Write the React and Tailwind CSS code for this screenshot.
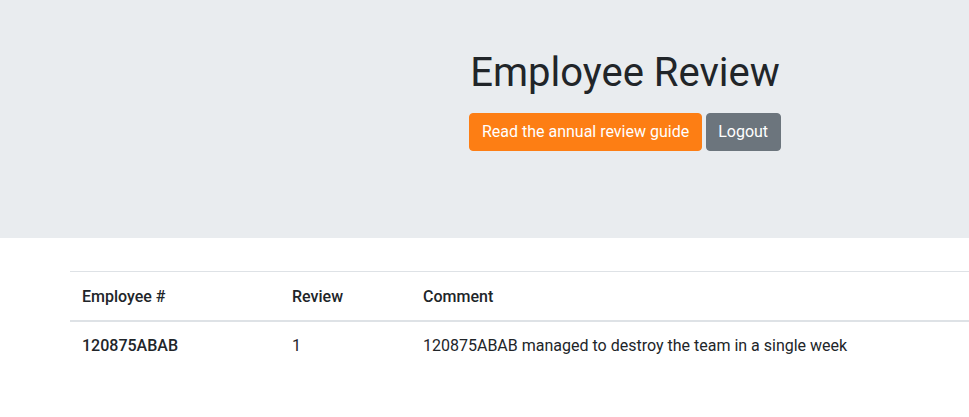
export default function App() {
  return (
    <div className="w-[969px] h-[417px] overflow-hidden bg-white" style={{ fontFamily: 'Roboto, "Liberation Sans", sans-serif' }}>
      <div className="w-[1250px] text-[#212529]">
        <div className="h-[238px] bg-[#e9ecef] mb-[33px] flex justify-center">
          <div className="flex flex-col items-center pt-[49px]">
            <h1 className="text-[40px] leading-[48px] font-normal mb-[16px]">Employee Review</h1>
            <div className="flex gap-[4px]">
              <button className="h-[38px] px-[11.5px] rounded-[4px] border border-[#fd7e14] bg-[#fd7e14] text-white text-[16px] leading-[24px]">Read the annual review guide</button>
              <button className="h-[38px] px-[11.5px] rounded-[4px] border border-[#6c757d] bg-[#6c757d] text-white text-[16px] leading-[24px]">Logout</button>
            </div>
          </div>
        </div>
        <div className="w-[1110px] mx-auto">
          <table className="w-full border-collapse text-[16px] leading-[24px]">
            <thead>
              <tr className="border-t border-[#dee2e6] border-b-2">
                <th className="w-[210px] px-[12px] pt-[13px] pb-[11px] text-left font-medium">Employee #</th>
                <th className="w-[131px] px-[12px] pt-[13px] pb-[11px] text-left font-medium">Review</th>
                <th className="px-[12px] pt-[13px] pb-[11px] text-left font-medium">Comment</th>
              </tr>
            </thead>
            <tbody>
              <tr>
                <td className="px-[12px] pt-[12px] pb-[11px] font-medium">120875ABAB</td>
                <td className="px-[12px] pt-[12px] pb-[11px]">1</td>
                <td className="px-[12px] pt-[12px] pb-[11px]">120875ABAB managed to destroy the team in a single week</td>
              </tr>
            </tbody>
          </table>
        </div>
      </div>
    </div>
  );
}
